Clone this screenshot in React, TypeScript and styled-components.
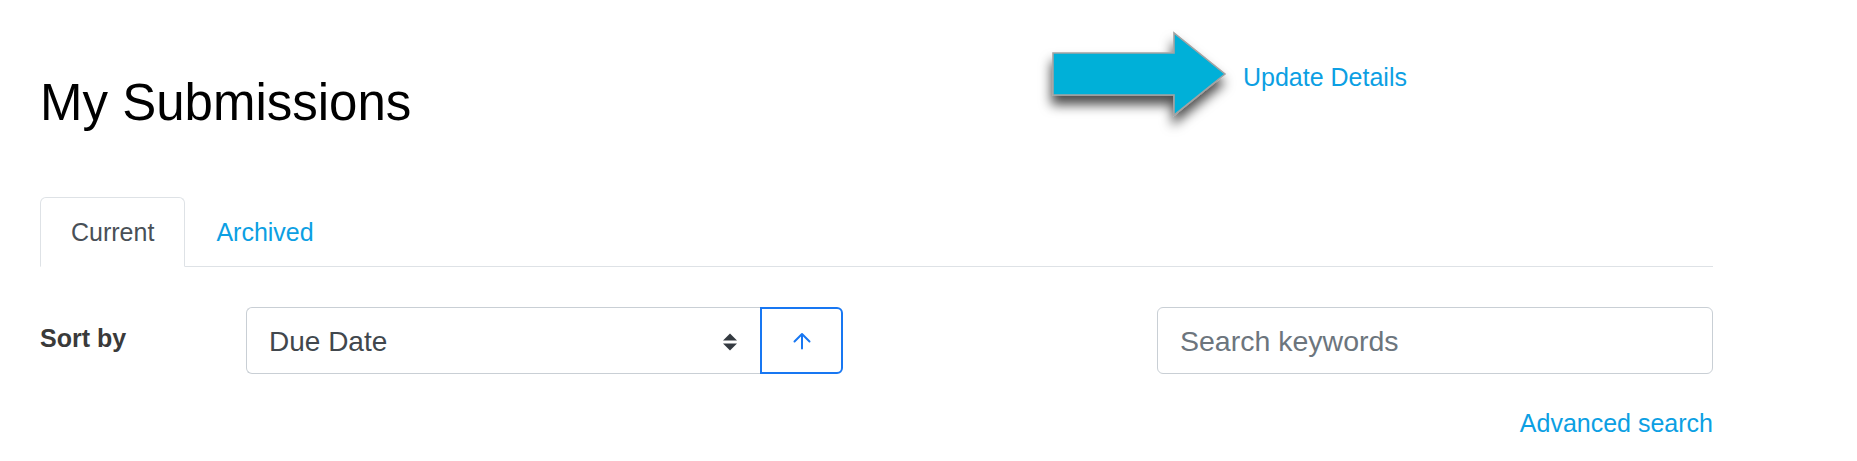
import styled, { createGlobalStyle } from 'styled-components';

const GlobalStyle = createGlobalStyle`
  html, body {
    margin: 0;
    padding: 0;
    background: #fff;
  }
  body {
    font-family: "Liberation Sans", Arial, sans-serif;
    color: #212529;
  }
`;

const LINK = '#0c9fe3';
const PRIMARY = '#1877f2';

export default function App() {
  return (
    <>
      <GlobalStyle />
      <Page>
        <HeaderRow>
          <Title>My Submissions</Title>
          <Aside>
            <Pointer />
            <TextLink href="#" $top={31}>
              Update Details
            </TextLink>
          </Aside>
        </HeaderRow>

        <Tabs>
          <Tab $active>Current</Tab>
          <Tab>Archived</Tab>
        </Tabs>

        <FilterRow>
          <SortLabel>Sort by</SortLabel>
          <SortGroup>
            <SortSelect>
              <span>Due Date</span>
              <Caret />
            </SortSelect>
            <DirectionButton type="button" aria-label="Sort ascending">
              <UpArrow />
            </DirectionButton>
          </SortGroup>
          <span />
          <SearchBox placeholder="Search keywords" />
        </FilterRow>

        <Footer>
          <TextLink href="#">Advanced search</TextLink>
        </Footer>
      </Page>
    </>
  );
}

function Pointer() {
  return (
    <PointerSvg width="200" height="105" viewBox="0 0 200 105">
      <defs>
        <filter id="pointer-shadow" x="-20%" y="-20%" width="140%" height="160%">
          <feDropShadow dx="-1" dy="9" stdDeviation="6" floodColor="#000" floodOpacity="0.7" />
        </filter>
      </defs>
      <path
        d="M10 25 L131 25 L131 5 L182 46 L131 87 L131 67 L10 67 Z"
        fill="#00b0d8"
        stroke="#a3a3a3"
        strokeWidth="1.6"
        strokeLinejoin="miter"
        filter="url(#pointer-shadow)"
      />
    </PointerSvg>
  );
}

function Caret() {
  return (
    <svg width="14" height="18" viewBox="0 0 14 18">
      <path d="M0 7.5 L7 0.5 L14 7.5 Z" fill="#343a40" />
      <path d="M0 10.5 L14 10.5 L7 17.5 Z" fill="#343a40" />
    </svg>
  );
}

function UpArrow() {
  return (
    <svg width="20" height="18" viewBox="0 0 20 18">
      <path
        d="M10 16.5 V2 M2.5 9.5 L10 2 L17.5 9.5"
        fill="none"
        stroke={PRIMARY}
        strokeWidth="2"
        strokeLinecap="round"
        strokeLinejoin="round"
      />
    </svg>
  );
}

const Page = styled.div`
  width: 1673px;
  padding: 0 144px 0 40px;
`;

const HeaderRow = styled.header`
  display: grid;
  grid-template-columns: 1003px auto;
  align-items: start;
  padding-top: 28px;
`;

const Title = styled.h1`
  margin: 45px 0 0;
  font-size: 51px;
  font-weight: 400;
  line-height: 60px;
  color: #000;
  white-space: nowrap;
`;

const Aside = styled.div`
  display: flex;
  align-items: flex-start;
`;

const PointerSvg = styled.svg`
  display: block;
  flex: 0 0 auto;
  overflow: visible;
`;

const TextLink = styled.a<{ $top?: number }>`
  display: inline-block;
  margin-top: ${(p) => p.$top ?? 0}px;
  font-size: 25px;
  line-height: 37.5px;
  color: ${LINK};
  text-decoration: none;
  white-space: nowrap;
`;

const Tabs = styled.ul`
  display: flex;
  margin: 64px 0 0;
  padding: 0;
  list-style: none;
  height: 69px;
  border-bottom: 1px solid #dee2e6;
`;

const Tab = styled.li<{ $active?: boolean }>`
  margin-bottom: -1px;
  padding: 16px 30px 15px;
  font-size: 25px;
  line-height: 37px;
  border: 1px solid ${(p) => (p.$active ? '#dee2e6' : 'transparent')};
  border-bottom-color: ${(p) => (p.$active ? '#fff' : 'transparent')};
  border-radius: 6px 6px 0 0;
  background: ${(p) => (p.$active ? '#fff' : 'transparent')};
  color: ${(p) => (p.$active ? '#495057' : LINK)};
`;

const FilterRow = styled.div`
  display: grid;
  grid-template-columns: 206px 597px 1fr 556px;
  align-items: start;
  margin-top: 40px;
`;

const SortLabel = styled.label`
  padding-top: 13px;
  font-size: 25px;
  font-weight: 700;
  line-height: 36px;
  color: #3a3a3a;
`;

const SortGroup = styled.div`
  display: flex;
  height: 67px;
`;

const SortSelect = styled.div`
  flex: 1 1 auto;
  display: flex;
  align-items: center;
  justify-content: space-between;
  padding: 2px 23px 0 22px;
  font-size: 28px;
  line-height: 42px;
  color: #41474d;
  border: 1.5px solid #c9cfd5;
  border-right: none;
  border-radius: 6px 0 0 6px;
`;

const DirectionButton = styled.button`
  flex: 0 0 83px;
  display: flex;
  align-items: center;
  justify-content: center;
  padding: 0;
  background: #fff;
  border: 2px solid ${PRIMARY};
  border-radius: 0 6px 6px 0;
`;

const SearchBox = styled.input`
  box-sizing: border-box;
  height: 67px;
  width: 100%;
  padding: 2px 22px 0;
  font-family: "Liberation Sans", Arial, sans-serif;
  font-size: 28.5px;
  color: #495057;
  border: 1.5px solid #c9cfd5;
  border-radius: 6px;
  outline: none;

  &::placeholder {
    color: #6c757d;
  }
`;

const Footer = styled.div`
  display: flex;
  justify-content: flex-end;
  margin-top: 31px;
`;
